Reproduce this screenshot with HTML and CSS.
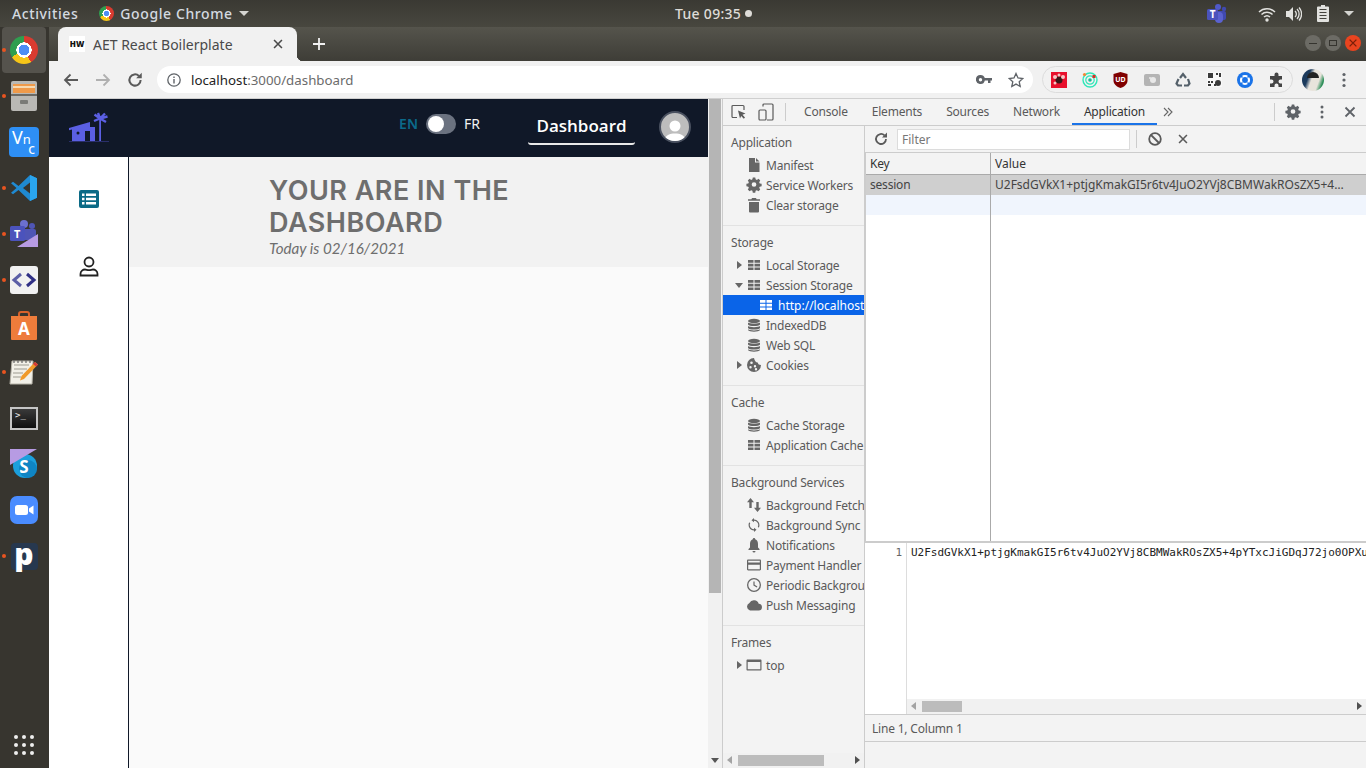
FILE: index.html
```html
<!DOCTYPE html>
<html lang="en">
<head>
  <meta charset="UTF-8">
  <title>AET React Boilerplate</title>
  <link rel="stylesheet" href="styles.css">
</head>
<body>
  <svg class="sprite" xmlns="http://www.w3.org/2000/svg">
    <symbol id="i-table" viewBox="0 0 16 16"><path d="M2 3h5.500v2.700H2zM8.500 3H14v2.700H8.500zM2 6.700h5.500v2.700H2zM8.500 6.700H14v2.700H8.500zM2 10.400h5.500v2.700H2zM8.500 10.400H14v2.700H8.500z"/></symbol>
    <symbol id="i-db" viewBox="0 0 16 16"><ellipse cx="8" cy="4" rx="6" ry="2.200"/><path d="M2 5.600c1 1.500 11 1.500 12 0v2c-1 2-11 2-12 0zM2 9c1 1.500 11 1.500 12 0v2c-1 2-11 2-12 0zM2 12.300c1 1.500 11 1.500 12 0v.7c-1 2.300-11 2.300-12 0z"/></symbol>
    <symbol id="i-file" viewBox="0 0 16 16"><path d="M3 1h6v4.500h4.500V15H3zM10 1l3.500 3.500H10z"/></symbol>
    <symbol id="i-gear" viewBox="0 0 16 16"><path fill-rule="evenodd" d="M6.700 1h2.600l.4 2 1.300.6 1.800-1.100 1.800 1.800-1.100 1.800.6 1.300 2 .4v2.600l-2 .4-.6 1.300 1.100 1.800-1.800 1.800-1.800-1.100-1.300.6-.4 2H6.700l-.4-2-1.300-.6-1.800 1.100-1.800-1.800 1.100-1.800-.6-1.300-2-.4V7.800l2-.4.6-1.300-1.100-1.800 1.800-1.800L5 3.600l1.300-.6zM8 6a2.500 2.500 0 1 0 0 5 2.500 2.500 0 0 0 0-5z" transform="translate(.5 -.5) scale(.94)"/></symbol>
    <symbol id="i-trash" viewBox="0 0 16 16"><path d="M6 1h4l.6 1.200H14v1.600H2V2.200h3.400zM3 5h10v9.500a1 1 0 0 1-1 1H4a1 1 0 0 1-1-1z"/></symbol>
    <symbol id="i-cookie" viewBox="0 0 16 16"><path fill-rule="evenodd" d="M8 1a7 7 0 1 0 7 7c-1.800 0-3-.8-3.300-2.500C9.800 5.500 8.500 3.500 8 1zM5.500 4.500a1.300 1.300 0 1 1 0 2.600 1.300 1.300 0 0 1 0-2.600zM4.500 9a1.200 1.200 0 1 1 0 2.400 1.200 1.200 0 0 1 0-2.400zM9 8a1.200 1.200 0 1 1 0 2.400A1.200 1.200 0 0 1 9 8zm1 3a1.200 1.200 0 1 1 0 2.400 1.200 1.200 0 0 1 0-2.400z"/></symbol>
    <symbol id="i-updown" viewBox="0 0 16 16"><path d="M4.500 1L8 5.200H5.700V11H3.300V5.200H1zM11.500 15L8 10.800h2.300V5h2.400v5.800H15z"/></symbol>
    <symbol id="i-sync" viewBox="0 0 16 16"><path d="M8 2v1.800a4.200 4.200 0 0 1 3.800 6l1 1A5.700 5.700 0 0 0 8 2.500V1L5.500 3.200 8 5.300zM8 14v-1.800a4.200 4.200 0 0 1-3.800-6l-1-1A5.700 5.700 0 0 0 8 13.500V15l2.500-2.200L8 10.700z"/></symbol>
    <symbol id="i-bell" viewBox="0 0 16 16"><path d="M8 1a1.200 1.200 0 0 1 1.200 1.300C11.200 3 12 4.800 12 7v3.500l1.500 1.500v1h-11v-1L4 10.500V7c0-2.200.8-4 2.800-4.700A1.200 1.200 0 0 1 8 1zM6.500 14h3a1.500 1.500 0 0 1-3 0z"/></symbol>
    <symbol id="i-card" viewBox="0 0 16 16"><path fill-rule="evenodd" d="M2.200 2.500h11.600c.7 0 1.200.5 1.200 1.200v8.600c0 .7-.5 1.200-1.200 1.200H2.200c-.7 0-1.200-.5-1.200-1.200V3.700c0-.7.500-1.200 1.200-1.200zm0 1.300v1.700h11.600V3.800zm0 4v4.400h11.600V7.800z"/></symbol>
    <symbol id="i-clock" viewBox="0 0 16 16"><path fill-rule="evenodd" d="M8 1a7 7 0 1 1 0 14A7 7 0 0 1 8 1zm0 1.300a5.700 5.700 0 1 0 0 11.400A5.700 5.700 0 0 0 8 2.300zM7.400 4.500h1.200v3.300l2.800 1.700-.6 1-3.400-2z"/></symbol>
    <symbol id="i-cloud" viewBox="0 0 16 16"><path d="M12.700 6.700A5 5 0 0 0 3.400 6 4 4 0 0 0 4 13.500h8.400a3.400 3.400 0 0 0 .3-6.800z"/></symbol>
    <symbol id="i-frame" viewBox="0 0 16 16"><path fill-rule="evenodd" d="M1.500 2.500h13c.6 0 1 .4 1 1v9c0 .6-.4 1-1 1h-13c-.6 0-1-.4-1-1v-9c0-.6.4-1 1-1zm.2 2.500v7.300h12.600V5z"/></symbol>
    <symbol id="i-close" viewBox="0 0 16 16"><path d="M3.500 3.500l9 9M12.500 3.500l-9 9" fill="none" stroke="currentColor" stroke-width="1.800"/></symbol>
    <symbol id="i-reload" viewBox="0 0 16 16"><path d="M13 8a5 5 0 1 1-1.500-3.600" fill="none" stroke="currentColor" stroke-width="1.800"/><path d="M14 1.500v5H9z"/></symbol>
  </svg>

  <div class="topbar">
    <span class="topbar-item activities">Activities</span>
    <span class="chrome-logo small"></span>
    <span class="topbar-item">Google Chrome</span>
    <span class="caret"></span>
    <div class="clock">Tue 09:35<span class="clock-dot"></span></div>
    <div class="tray">
      <svg class="tray-teams" width="22" height="22" viewBox="0 0 22 22"><circle cx="12" cy="4" r="3" fill="#5059c9"/><circle cx="18" cy="6" r="2.200" fill="#4049b0"/><rect x="9" y="8" width="11" height="9" rx="2" fill="#4049b0"/><rect x="9" y="9" width="8" height="11" rx="4" fill="#5a62d0"/><rect x="1" y="6" width="11" height="11" rx="1.500" fill="#4b53bc"/><text x="3.800" y="15" class="t-letter">T</text></svg>
      <svg width="18" height="16" viewBox="0 0 18 16"><path d="M1 6a11.500 11.500 0 0 1 16 0M3.500 8.500a8 8 0 0 1 11 0M6 11a4.500 4.500 0 0 1 6 0" fill="none" stroke="#e2e2df" stroke-width="1.500"/><circle cx="9" cy="14" r="1.700" fill="#e2e2df"/></svg>
      <svg class="tray-sound" width="17" height="16" viewBox="0 0 17 16"><path d="M1 5h3l4-4v14l-4-4H1z" fill="#e2e2df"/><path d="M10 5a4 4 0 0 1 0 6M12 3a7 7 0 0 1 0 10M14 1.500a9.500 9.500 0 0 1 0 13" fill="none" stroke="#e2e2df" stroke-width="1.300"/></svg>
      <svg class="tray-battery" width="12" height="17" viewBox="0 0 12 17"><path d="M4 0h4v1.500h3a1 1 0 0 1 1 1V16a1 1 0 0 1-1 1H1a1 1 0 0 1-1-1V2.500a1 1 0 0 1 1-1h3z" fill="#e2e2df"/><path d="M2.500 4.500h7M2.500 7.500h7M2.500 10.500h7M2.500 13.500h7" stroke="#45443e" stroke-width="1.200"/></svg>
      <span class="caret"></span>
    </div>
  </div>

  <div class="desktop">
    <nav class="dock">
      <div class="dock-item active running"><span class="chrome-logo"></span></div>
      <div class="dock-item running">
        <svg width="28" height="32" viewBox="0 0 28 32"><rect x="1" y="1" width="26" height="30" rx="2" fill="#b9b8b4"/><rect x="3" y="4" width="22" height="9" fill="#ef9a4a"/><rect x="3" y="6" width="22" height="2" fill="#f7d9b0"/><rect x="1" y="14" width="26" height="2" fill="#6b6a66"/><rect x="10" y="20" width="8" height="4" rx="1" fill="#7a7a76"/></svg>
      </div>
      <div class="dock-item">
        <div class="vnc-icon"><span>V<i>n</i></span><span class="vnc-c">c</span></div>
      </div>
      <div class="dock-item running">
        <svg width="28" height="28" viewBox="0 0 28 28"><path d="M20 1l7 3.300v19.400L20 27 8.500 16l-5.500 4.300L1 18.800 6.500 14 1 9.200 3 7.700 8.500 12z" fill="#1f8ad2"/><path d="M20 1l7 3.300v19.400L20 27z" fill="#2aa5ee"/><path d="M20 8.500v11L13 14z" fill="#37352f"/></svg>
      </div>
      <div class="dock-item running">
        <svg width="30" height="28" viewBox="0 0 30 28"><circle cx="15" cy="4" r="4" fill="#6b70cf"/><circle cx="23" cy="6" r="3" fill="#4f55b5"/><rect x="13" y="9" width="14" height="11" rx="2" fill="#4f55b5"/><rect x="1" y="6" width="15" height="15" rx="1.500" fill="#4b53bc"/><text x="5" y="18" class="t-letter big">T</text><path d="M29 14v13H8z" fill="#b79be3"/></svg>
      </div>
      <div class="dock-item running">
        <svg width="28" height="28" viewBox="0 0 28 28"><rect width="28" height="28" rx="3" fill="#f1f1f1"/><path d="M11 8l-7 6 7 6" fill="none" stroke="#5b5ea6" stroke-width="3"/><path d="M17 8l7 6-7 6" fill="none" stroke="#2f2f85" stroke-width="3"/></svg>
      </div>
      <div class="dock-item">
        <svg width="28" height="30" viewBox="0 0 28 30"><path d="M9 5V3a2 2 0 0 1 2-2h6a2 2 0 0 1 2 2v2" fill="none" stroke="#d8622b" stroke-width="2"/><path d="M1 5h26v23a1 1 0 0 1-1 1H2a1 1 0 0 1-1-1z" fill="#ee7c3b"/><text x="14" y="24" class="store-a">A</text></svg>
      </div>
      <div class="dock-item running">
        <svg width="30" height="28" viewBox="0 0 30 28"><path d="M3 3h21l-1 23H1z" fill="#f2f0e8" stroke="#b6b3a8"/><path d="M5 7h15M5 11h13M4 15h10M4 19h8" stroke="#9c9a90"/><path d="M5 2v3M9 2v3M13 2v3M17 2v3M21 2v3" stroke="#666" stroke-width="1.200"/><path d="M26 4l3 2.500L15 21l-4 1.500L12.500 18z" fill="#f09a2a"/><path d="M26 4l3 2.500-2 2-3-2.500z" fill="#d23b3b"/></svg>
      </div>
      <div class="dock-item">
        <div class="term-icon">&gt;_</div>
      </div>
      <div class="dock-item">
        <svg width="30" height="30" viewBox="0 0 30 30"><circle cx="16" cy="17" r="12" fill="#1b9fdc"/><circle cx="19" cy="20" r="9" fill="#0f85c4"/><path d="M1 0h27L1 16z" fill="#b79be3"/><text x="15" y="24" class="skype-s">S</text></svg>
      </div>
      <div class="dock-item">
        <svg width="28" height="28" viewBox="0 0 28 28"><rect width="28" height="28" rx="7" fill="#4a8cff"/><rect x="5" y="9" width="13" height="10" rx="2.500" fill="#fff"/><path d="M19 12.500l4.500-3v9l-4.500-3z" fill="#fff"/></svg>
      </div>
      <div class="dock-item running">
        <div class="p-icon">p</div>
      </div>
      <div class="app-grid">
        <i></i><i></i><i></i><i></i><i></i><i></i><i></i><i></i><i></i>
      </div>
    </nav>

    <div class="window">
      <div class="tabstrip">
        <div class="tab">
          <span class="favicon">HW</span>
          <span class="tab-title">AET React Boilerplate</span>
          <svg class="tab-close" width="14" height="14"><use href="#i-close"/></svg>
        </div>
        <svg class="new-tab" width="14" height="14" viewBox="0 0 14 14"><path d="M7 1v12M1 7h12" stroke="#f1f1f1" stroke-width="1.800"/></svg>
        <div class="win-controls">
          <span class="win-btn"><i class="win-min"></i></span>
          <span class="win-btn"><i class="win-max"></i></span>
          <span class="win-btn win-close"><svg width="12" height="12"><use href="#i-close"/></svg></span>
        </div>
      </div>

      <div class="toolbar">
        <svg class="nav-btn" width="32" height="16" viewBox="0 0 32 16"><path d="M23 8H10M15.500 2.500L10 8l5.500 5.500" fill="none" stroke="#5a5a5a" stroke-width="1.800"/></svg>
        <svg class="nav-btn" width="32" height="16" viewBox="0 0 32 16"><path d="M9 8h13M16.500 2.500L22 8l-5.500 5.500" fill="none" stroke="#b0b0b0" stroke-width="1.800"/></svg>
        <svg class="nav-btn reload-btn" width="18" height="18"><use href="#i-reload"/></svg>
        <div class="omnibox">
          <svg class="omni-info" width="16" height="16" viewBox="0 0 16 16"><circle cx="8" cy="8" r="6.200" fill="none" stroke="#5f6368" stroke-width="1.300"/><path d="M7.300 7h1.400v4.500H7.300zM7.300 4.500h1.400v1.400H7.300z" fill="#5f6368"/></svg>
          <span class="url"><b>localhost</b>:3000/dashboard</span>
          <svg class="omni-key" width="16" height="10" viewBox="0 0 16 10"><path fill-rule="evenodd" d="M4.500 0a4.500 4.500 0 0 1 4.300 3H16v2.500h-1.500V8h-2.500V5.500H8.800A4.500 4.500 0 1 1 4.500 0zm0 3a1.700 1.700 0 1 0 0 3.400 1.700 1.700 0 0 0 0-3.400z" fill="#5f6368"/></svg>
          <svg class="omni-star" width="16" height="16" viewBox="0 0 16 16"><path d="M8 1.500l2 4.500 4.800.5-3.600 3.200 1 4.800L8 12.100l-4.200 2.400 1-4.800L1.200 6.500 6 6z" fill="none" stroke="#5f6368" stroke-width="1.300"/></svg>
        </div>
        <div class="extensions">
          <span class="ext"><svg width="16" height="16" viewBox="0 0 16 16"><rect width="16" height="16" fill="#e8112d"/><circle cx="8" cy="8" r="3.500" fill="#3a1a1a"/><circle cx="4" cy="5" r="2" fill="#f7c6c6"/><circle cx="12" cy="5" r="2" fill="#f7c6c6"/><circle cx="4" cy="11" r="1.500" fill="#f7c6c6"/><circle cx="8" cy="3" r="1.500" fill="#f7c6c6"/></svg></span>
          <span class="ext"><svg width="16" height="16" viewBox="0 0 16 16"><circle cx="8" cy="8" r="7" fill="none" stroke="#2ee6b8" stroke-width="1.400"/><circle cx="8" cy="8" r="4.200" fill="none" stroke="#2ee6b8" stroke-width="1.200"/><circle cx="8" cy="8" r="1.800" fill="#1fb896"/><circle cx="2.500" cy="2.500" r="1.600" fill="#f58634"/><rect x="10.500" y="3" width="3" height="3" fill="#d93025"/></svg></span>
          <span class="ext"><svg width="15" height="16" viewBox="0 0 15 16"><path d="M7.500 0l7 2v7c0 3-3.500 6-7 7-3.500-1-7-4-7-7V2z" fill="#800000"/><text x="7.500" y="10" class="ublock">UD</text></svg></span>
          <span class="ext"><svg width="16" height="12" viewBox="0 0 16 12"><rect width="16" height="12" rx="2" fill="#b4b4b4"/><circle cx="9" cy="6" r="3" fill="#e8e8e8"/><circle cx="6" cy="4" r="1" fill="#e8e8e8"/></svg></span>
          <span class="ext"><svg width="16" height="16" viewBox="0 0 16 16"><g fill="none" stroke="#54606a" stroke-width="2.200"><path d="M5 6l3-4 3 4"/><path d="M13 7l1.500 4.500-1.500 2H9"/><path d="M3.500 7L1.500 11.500l1.500 2h4"/></g></svg></span>
          <span class="ext"><svg width="15" height="15" viewBox="0 0 15 15"><rect width="15" height="15" fill="#f8f8f8"/><path d="M1 1h5v5H1zM9 1h2v2H9zM12 1h2v4h-2zM1 9h2v2H1zM4 9h2v2H4zM1 12h3v2H1zM7 12h2v2H7z" fill="#3a3a3a"/><circle cx="11" cy="11" r="3" fill="#3a3a3a"/></svg></span>
          <span class="ext"><svg width="16" height="16" viewBox="0 0 16 16"><circle cx="8" cy="8" r="8" fill="#1a73e8"/><circle cx="8" cy="8" r="4" fill="none" stroke="#fff" stroke-width="2.200"/><path d="M3 3l2.500 2.500M13 3l-2.500 2.500M3 13l2.500-2.500M13 13l-2.500-2.500" stroke="#1a73e8" stroke-width="1.500"/></svg></span>
          <span class="ext"><svg width="15" height="15" viewBox="0 0 15 15"><path d="M5.500 2.500a2 2 0 0 1 4 0V4H13v3.500h-1.500a2 2 0 0 0 0 4H13V15H9.500v-1.500a2 2 0 0 0-4 0V15H1v-3.500h1.500a2 2 0 0 0 0-4H1V4h4.500z" fill="#444"/></svg></span>
        </div>
        <div class="profile-pic"><i></i></div>
        <svg class="toolbar-menu" width="4" height="16" viewBox="0 0 4 16"><circle cx="2" cy="2.500" r="1.600" fill="#5f6368"/><circle cx="2" cy="8" r="1.600" fill="#5f6368"/><circle cx="2" cy="13.500" r="1.600" fill="#5f6368"/></svg>
      </div>

      <div class="content">
        <div class="page">
          <header class="app-header">
            <svg class="app-logo" width="40" height="30" viewBox="0 0 40 30"><path d="M0 16L21 10v5h5v14H3V17.500l-3 .8z" fill="#5b5fe3"/><path d="M30.200 6h1.800v23h-1.800z" fill="#5b5fe3"/><path d="M31 6.500L25.500 2.500M31 6.500L29 1M31 6.500L36 1.500M31 6.500L38.500 4.500M31 6.500L25 9M31 6.500L37 10" fill="none" stroke="#5b5fe3" stroke-width="2.400"/><circle cx="9" cy="21" r="1.500" fill="#101828"/><rect x="16" y="19" width="5" height="10" fill="#101828"/><rect x="0" y="29" width="40" height="1" fill="#2a2f6a"/></svg>
            <div class="lang-switch">
              <span class="lang-en">EN</span>
              <span class="toggle"><i></i></span>
              <span class="lang-fr">FR</span>
            </div>
            <a class="nav-link">Dashboard</a>
            <div class="user-avatar">
              <svg width="24" height="24" viewBox="0 0 24 24"><circle cx="12" cy="9" r="5.500" fill="#fff"/><path d="M1 24c1-6 6-7.500 11-7.500S22 18 23 24z" fill="#fff"/></svg>
            </div>
          </header>
          <div class="page-body">
            <aside class="side-nav">
              <svg class="side-icon" width="20" height="18" viewBox="0 0 20 18"><rect width="20" height="18" rx="2" fill="#0b6a86"/><path d="M3 3.500h2.500V6H3zM7 3.500h10V6H7zM3 7.800h2.500v2.500H3zM7 7.800h10v2.500H7zM3 12h2.500v2.500H3zM7 12h10v2.500H7z" fill="#fff"/></svg>
              <svg class="side-icon" width="20" height="21" viewBox="0 0 20 21"><circle cx="10" cy="6" r="4.500" fill="none" stroke="#222" stroke-width="1.800"/><path d="M1.500 19.500v-1.500c0-3 2.500-4.500 4.500-4.500 1.500 0 2 .6 4 .6s2.500-.6 4-.6c2 0 4.500 1.500 4.500 4.500v1.500z" fill="none" stroke="#222" stroke-width="1.800"/></svg>
            </aside>
            <main class="main">
              <section class="banner">
                <h1>YOUR ARE IN THE DASHBOARD</h1>
                <p>Today is 02/16/2021</p>
              </section>
            </main>
          </div>
        </div>

        <div class="page-scroll">
          <div class="page-thumb"></div>
          <span class="arrow-down"></span>
        </div>

        <div class="devtools">
          <div class="dt-toolbar">
            <svg class="dt-icon first" width="16" height="16" viewBox="0 0 16 16"><path d="M6 13.500H2a1 1 0 0 1-1-1v-10a1 1 0 0 1 1-1h10a1 1 0 0 1 1 1V6" fill="none" stroke="#5a5a5a" stroke-width="1.200"/><path d="M7 6.500l7.500 3-3 1.200 2.500 2.800-1.200 1.200-2.600-2.800L9 14.500z" fill="#5a5a5a"/></svg>
            <svg class="dt-icon" width="16" height="18" viewBox="0 0 16 18"><path d="M5 3.500V2a1 1 0 0 1 1-1h8a1 1 0 0 1 1 1v14a1 1 0 0 1-1 1H9" fill="none" stroke="#5a5a5a" stroke-width="1.200"/><rect x="1" y="7" width="7" height="10" rx="1" fill="none" stroke="#5a5a5a" stroke-width="1.200"/></svg>
            <span class="dt-sep"></span>
            <div class="dt-tabs">
              <span class="dt-tab">Console</span>
              <span class="dt-tab">Elements</span>
              <span class="dt-tab">Sources</span>
              <span class="dt-tab">Network</span>
              <span class="dt-tab selected">Application</span>
            </div>
            <svg class="dt-more" width="10" height="10" viewBox="0 0 10 10"><path d="M1 1l4 4-4 4M5 1l4 4-4 4" fill="none" stroke="#666" stroke-width="1.100"/></svg>
            <span class="dt-sep push"></span>
            <svg class="dt-gear" width="16" height="16"><use href="#i-gear"/></svg>
            <svg class="dt-dots" width="4" height="14" viewBox="0 0 4 14"><circle cx="2" cy="2" r="1.500"/><circle cx="2" cy="7" r="1.500"/><circle cx="2" cy="12" r="1.500"/></svg>
            <svg class="dt-x" width="16" height="16"><use href="#i-close"/></svg>
          </div>

          <div class="dt-panels">
            <div class="dt-sidebar">
              <div class="tree">
                <div class="tree-section">
                  <div class="tree-title">Application</div>
                  <div class="tree-item"><span class="tw"></span><svg class="ti"><use href="#i-file"/></svg>Manifest</div>
                  <div class="tree-item"><span class="tw"></span><svg class="ti"><use href="#i-gear"/></svg>Service Workers</div>
                  <div class="tree-item"><span class="tw"></span><svg class="ti"><use href="#i-trash"/></svg>Clear storage</div>
                </div>
                <div class="tree-section">
                  <div class="tree-title">Storage</div>
                  <div class="tree-item"><span class="tw closed"></span><svg class="ti"><use href="#i-table"/></svg>Local Storage</div>
                  <div class="tree-item"><span class="tw open"></span><svg class="ti"><use href="#i-table"/></svg>Session Storage</div>
                  <div class="tree-item nested selected"><svg class="ti"><use href="#i-table"/></svg>http://localhost</div>
                  <div class="tree-item"><span class="tw"></span><svg class="ti"><use href="#i-db"/></svg>IndexedDB</div>
                  <div class="tree-item"><span class="tw"></span><svg class="ti"><use href="#i-db"/></svg>Web SQL</div>
                  <div class="tree-item"><span class="tw closed"></span><svg class="ti"><use href="#i-cookie"/></svg>Cookies</div>
                </div>
                <div class="tree-section">
                  <div class="tree-title">Cache</div>
                  <div class="tree-item"><span class="tw"></span><svg class="ti"><use href="#i-db"/></svg>Cache Storage</div>
                  <div class="tree-item"><span class="tw"></span><svg class="ti"><use href="#i-table"/></svg>Application Cache</div>
                </div>
                <div class="tree-section">
                  <div class="tree-title">Background Services</div>
                  <div class="tree-item"><span class="tw"></span><svg class="ti"><use href="#i-updown"/></svg>Background Fetch</div>
                  <div class="tree-item"><span class="tw"></span><svg class="ti"><use href="#i-sync"/></svg>Background Sync</div>
                  <div class="tree-item"><span class="tw"></span><svg class="ti"><use href="#i-bell"/></svg>Notifications</div>
                  <div class="tree-item"><span class="tw"></span><svg class="ti"><use href="#i-card"/></svg>Payment Handler</div>
                  <div class="tree-item"><span class="tw"></span><svg class="ti"><use href="#i-clock"/></svg>Periodic Background Sync</div>
                  <div class="tree-item"><span class="tw"></span><svg class="ti"><use href="#i-cloud"/></svg>Push Messaging</div>
                </div>
                <div class="tree-section last">
                  <div class="tree-title">Frames</div>
                  <div class="tree-item"><span class="tw closed"></span><svg class="ti"><use href="#i-frame"/></svg>top</div>
                </div>
              </div>
              <div class="h-scroll">
                <span class="arrow-left"></span>
                <span class="h-thumb side-thumb"></span>
                <span class="arrow-right dark"></span>
              </div>
            </div>

            <div class="dt-main">
              <div class="filter-bar">
                <svg class="filter-reload" width="16" height="16"><use href="#i-reload"/></svg>
                <input class="filter-input" type="text" placeholder="Filter">
                <span class="dt-sep"></span>
                <svg class="filter-clear" width="16" height="16" viewBox="0 0 16 16"><circle cx="8" cy="8" r="5.800" fill="none" stroke="#5a5a5a" stroke-width="1.800"/><path d="M4 4l8 8" stroke="#5a5a5a" stroke-width="1.800"/></svg>
                <svg class="filter-x" width="14" height="14"><use href="#i-close"/></svg>
              </div>
              <div class="kv-table">
                <div class="kv-row kv-head"><div class="kv-key">Key</div><div class="kv-val">Value</div></div>
                <div class="kv-row kv-selected"><div class="kv-key">session</div><div class="kv-val">U2FsdGVkX1+ptjgKmakGI5r6tv4JuO2YVj8CBMWakROsZX5+4…</div></div>
                <div class="kv-row kv-empty"><div class="kv-key"></div><div class="kv-val"></div></div>
                <div class="kv-row kv-fill"><div class="kv-key"></div><div class="kv-val"></div></div>
              </div>
              <div class="preview">
                <div class="gutter">1</div>
                <div class="code-pane">
                  <div class="code-line">U2FsdGVkX1+ptjgKmakGI5r6tv4JuO2YVj8CBMWakROsZX5+4pYTxcJiGDqJ72jo0OPXu</div>
                  <div class="h-scroll">
                    <span class="arrow-left"></span>
                    <span class="h-thumb code-thumb"></span>
                    <span class="arrow-right dark"></span>
                  </div>
                </div>
              </div>
              <div class="status-bar">Line 1, Column 1</div>
              <div class="status-rest"></div>
            </div>
          </div>
        </div>
      </div>
    </div>
  </div>
</body>
</html>
```

FILE: styles.css
```css
* {
  box-sizing: border-box;
}

html,
body {
  margin: 0;
  height: 768px;
  overflow: hidden;
}

body {
  font-family: "Noto Sans", Arial, sans-serif;
  font-size: 12px;
  display: flex;
  flex-direction: column;
  background: #37352f;
}

.sprite {
  position: absolute;
  width: 0;
  height: 0;
}

/* gnome top bar */
.topbar {
  height: 27px;
  flex: none;
  display: flex;
  align-items: center;
  padding-left: 12px;
  color: #dcdcd8;
  background: linear-gradient(#3a3933, #48473f);
  position: relative;
}

.topbar-item {
  font-size: 14px;
  font-weight: 500;
  letter-spacing: 0.6px;
  color: #d4dae0;
}

.activities {
  margin-right: 21px;
}

.chrome-logo {
  display: block;
  width: 28px;
  height: 28px;
  border-radius: 50%;
  background: radial-gradient(circle, #4d8df5 0 26%, #fff 27% 38%, transparent 39%),
    conic-gradient(from 30deg, #d93b30 0 120deg, #f5c518 120deg 210deg, #2f9e4f 210deg 330deg, #d93b30 330deg);
}

.chrome-logo.small {
  width: 15px;
  height: 15px;
  margin-right: 6px;
}

.caret {
  width: 0;
  height: 0;
  margin-left: 6px;
  border-left: 5px solid transparent;
  border-right: 5px solid transparent;
  border-top: 5px solid #d4d4d0;
}

.clock {
  position: absolute;
  left: 675px;
  top: 4px;
  font-size: 14px;
  font-weight: 500;
  letter-spacing: 0.3px;
  color: #dedcd8;
  display: flex;
  align-items: center;
}

.clock-dot {
  width: 7px;
  height: 7px;
  border-radius: 50%;
  margin-left: 4px;
  background: #dedcd8;
}

.tray {
  margin-left: auto;
  display: flex;
  align-items: center;
  gap: 11px;
  padding-right: 12px;
}

.tray .caret {
  margin-left: 4px;
}

.tray-teams {
  margin-right: 19px;
}

.tray-sound {
  margin-left: -2px;
}

.tray-battery {
  margin-left: 4px;
}

.t-letter {
  font-family: "Noto Sans", sans-serif;
  font-size: 10px;
  font-weight: 700;
  fill: #fff;
}

.t-letter.big {
  font-size: 11px;
}

/* launcher */
.desktop {
  flex: 1;
  display: flex;
  min-height: 0;
}

.dock {
  width: 49px;
  flex: none;
  display: flex;
  flex-direction: column;
  background: #37352f;
}

.dock-item {
  height: 46px;
  flex: none;
  display: flex;
  align-items: center;
  justify-content: center;
  position: relative;
  margin: 0 3px 0 2px;
}

.dock-item.active {
  background: #55534d;
  border-radius: 4px;
}

.dock-item.running::before {
  content: "";
  position: absolute;
  left: 0;
  top: 21px;
  width: 4px;
  height: 4px;
  border-radius: 50%;
  background: #e95420;
}

.vnc-icon {
  width: 30px;
  height: 30px;
  border-radius: 4px;
  background: #2e8ff5;
  color: #fff;
  font-size: 18px;
  line-height: 20px;
  padding-left: 3px;
  position: relative;
}

.vnc-icon i {
  font-style: normal;
  font-size: 13px;
}

.vnc-c {
  position: absolute;
  right: 4px;
  bottom: 0;
  font-size: 14px;
  line-height: 16px;
}

.store-a {
  font-family: "Noto Sans", sans-serif;
  font-size: 17px;
  font-weight: 700;
  text-anchor: middle;
  fill: #fff;
}

.term-icon {
  width: 28px;
  height: 23px;
  border: 2px solid #c5c5c5;
  background: linear-gradient(#3a3a3a, #0f0f0f);
  color: #eee;
  font-family: "DejaVu Sans Mono", monospace;
  font-size: 9px;
  line-height: 13px;
  padding-left: 3px;
}

.skype-s {
  font-family: "Noto Sans", sans-serif;
  font-size: 17px;
  font-weight: 700;
  text-anchor: middle;
  fill: #fff;
}

.p-icon {
  width: 27px;
  height: 27px;
  border-radius: 4px;
  background: #27384f;
  color: #fff;
  font-size: 30px;
  font-weight: 900;
  line-height: 21px;
  text-align: center;
}

.app-grid {
  margin: auto 0 13px 14px;
  width: 20px;
  display: grid;
  grid-template-columns: repeat(3, 4px);
  gap: 4px;
}

.app-grid i {
  width: 4px;
  height: 4px;
  border-radius: 50%;
  background: #eee;
}

/* chrome window */
.window {
  flex: 1;
  min-width: 0;
  display: flex;
  flex-direction: column;
}

.tabstrip {
  height: 34px;
  flex: none;
  display: flex;
  align-items: flex-end;
  padding-left: 9px;
  background: linear-gradient(#55544c, #3e3d37);
}

.tab {
  width: 239px;
  height: 34px;
  display: flex;
  align-items: center;
  padding: 0 12px 0 11px;
  background: #f1f1f1;
  border-radius: 8px 8px 0 0;
  color: #4a4a4a;
  position: relative;
}

.tab::after {
  content: "";
  position: absolute;
  right: -6px;
  bottom: 0;
  width: 6px;
  height: 6px;
  background: radial-gradient(circle at 100% 0, transparent 6px, #f1f1f1 6.500px);
}

.favicon {
  width: 16px;
  height: 16px;
  background: #fff;
  color: #111;
  font-size: 8px;
  font-weight: 900;
  line-height: 16px;
  text-align: center;
}

.tab-title {
  font-size: 14px;
  margin-left: 8px;
  flex: 1;
}

.tab-close {
  color: #4a4a4a;
}

.new-tab {
  margin: 0 0 10px 15px;
}

.win-controls {
  margin-left: auto;
  display: flex;
  gap: 4px;
  padding: 0 5px 10px 0;
}

.win-btn {
  width: 16px;
  height: 16px;
  border-radius: 50%;
  background: #6c6b65;
  display: flex;
  align-items: center;
  justify-content: center;
}

.win-min {
  width: 8px;
  height: 1px;
  background: #35342f;
}

.win-max {
  width: 8px;
  height: 6px;
  border: 1px solid #35342f;
}

.win-close {
  background: #e9441f;
  color: #7a1f0a;
}

.toolbar {
  height: 38px;
  flex: none;
  display: flex;
  align-items: center;
  padding-left: 6px;
  background: #f1f1f1;
  border-bottom: 1px solid #cfcfcf;
}

.nav-btn {
  flex: none;
}

.reload-btn {
  margin: 0 7px;
  color: #5a5a5a;
  fill: #5a5a5a;
}

.omnibox {
  width: 876px;
  height: 27px;
  margin-left: 6px;
  padding: 0 9px;
  display: flex;
  align-items: center;
  background: #fff;
  border-radius: 14px;
}

.url {
  font-size: 13.300px;
  color: #6b6b6b;
  margin-left: 9px;
}

.url b {
  font-weight: 400;
  color: #222;
}

.omni-key {
  margin-left: auto;
}

.omni-star {
  margin-left: 16px;
}

.extensions {
  width: 251px;
  height: 27px;
  margin-left: 9px;
  display: flex;
  align-items: center;
  border: 1px solid #dcdcdc;
  border-radius: 14px;
}

.ext {
  width: 31.700px;
  display: flex;
  justify-content: center;
}

.ublock {
  font-family: "Noto Sans", sans-serif;
  font-size: 7px;
  font-weight: 700;
  text-anchor: middle;
  fill: #fff;
}

.profile-pic {
  width: 22px;
  height: 22px;
  margin-left: 9px;
  border-radius: 50%;
  background: linear-gradient(110deg, #1b3a5c 0 30%, #e8e4dc 45% 70%, #2f8f5a 85%);
  overflow: hidden;
}

.profile-pic i {
  display: block;
  width: 12px;
  height: 6px;
  margin: 3px 0 0 5px;
  background: #222;
  border-radius: 6px 6px 0 0;
}

.toolbar-menu {
  margin-left: 18px;
}

.content {
  flex: 1;
  min-height: 0;
  display: flex;
}

/* app under test */
.page {
  width: 659px;
  flex: none;
  display: flex;
  flex-direction: column;
  background: #fff;
}

.app-header {
  height: 58px;
  flex: none;
  display: flex;
  align-items: center;
  padding: 0 17px 2px 20px;
  background: #101828;
}

.app-logo {
  flex: none;
}

.lang-switch {
  margin-left: auto;
  display: flex;
  align-items: center;
  gap: 8px;
  font-size: 14px;
  margin-bottom: 7px;
}

.lang-en {
  color: #0b6a8a;
  font-weight: 600;
}

.lang-fr {
  color: #f3f3f3;
}

.toggle {
  width: 30px;
  height: 20px;
  padding: 2px;
  border-radius: 10px;
  background: #6b7280;
}

.toggle i {
  display: block;
  width: 16px;
  height: 16px;
  border-radius: 50%;
  background: #fff;
}

.nav-link {
  width: 107px;
  height: 34px;
  margin: 2px 0 0 48px;
  border-bottom: 2px solid #e8e8e8;
  border-radius: 0 0 3px 3px;
  color: #fff;
  font-family: "Open Sans", sans-serif;
  font-size: 17px;
  font-weight: 600;
  line-height: 30px;
  text-align: center;
}

.user-avatar {
  width: 32px;
  height: 32px;
  margin-left: 24px;
  border: 2px solid #4a5160;
  border-radius: 50%;
  background: #bdbdbd;
  overflow: hidden;
  display: flex;
  align-items: flex-end;
  justify-content: center;
}

.page-body {
  flex: 1;
  min-height: 0;
  display: flex;
}

.side-nav {
  width: 80px;
  flex: none;
  display: flex;
  flex-direction: column;
  align-items: center;
  gap: 48px;
  padding-top: 33px;
  border-right: 1px solid #101828;
}

.main {
  flex: 1;
  background: #fafafa;
}

.banner {
  height: 110px;
  padding: 18px 170px 0 140px;
  background: #f2f2f2;
}

.banner h1 {
  margin: 0;
  font-family: Inter, sans-serif;
  font-size: 27px;
  font-weight: 600;
  letter-spacing: 0.5px;
  line-height: 32px;
  color: #6e6e6e;
}

.banner p {
  margin: 0;
  font-family: Lato, sans-serif;
  font-size: 15.200px;
  font-style: italic;
  line-height: 19px;
  color: #6e6e6e;
}

.page-scroll {
  width: 14px;
  flex: none;
  background: #f1f1f1;
  position: relative;
  padding: 0 1px;
}

.page-thumb {
  height: 494px;
  background: #b5b5b5;
}

.arrow-down {
  position: absolute;
  left: 3px;
  bottom: 5px;
  border-left: 4px solid transparent;
  border-right: 4px solid transparent;
  border-top: 5px solid #555;
}

/* devtools */
.devtools {
  flex: 1;
  min-width: 0;
  display: flex;
  flex-direction: column;
  border-left: 1px solid #ccc;
  color: #5a5a5a;
  background: #f3f3f3;
  letter-spacing: -0.2px;
}

.dt-toolbar {
  height: 27px;
  flex: none;
  display: flex;
  align-items: center;
  border-bottom: 1px solid #ccc;
}

.dt-icon.first {
  margin-left: 8px;
}

.dt-icon {
  margin-right: 11px;
}

.dt-sep {
  width: 1px;
  height: 18px;
  flex: none;
  background: #ccc;
}

.dt-tabs {
  display: flex;
  height: 26px;
  margin-left: 6px;
}

.dt-tab {
  padding: 0 12px;
  line-height: 26px;
  color: #5a5a5a;
}

.dt-tab.selected {
  color: #333;
  border-bottom: 2px solid #1a73e8;
}

.dt-more {
  margin-left: 6px;
}

.dt-sep.push {
  margin-left: auto;
}

.dt-gear {
  margin-left: 10px;
  fill: #5f6368;
}

.dt-dots {
  margin-left: 19px;
  fill: #5f6368;
}

.dt-x {
  margin: 0 8px 0 18px;
  color: #5f6368;
}

.dt-panels {
  flex: 1;
  min-height: 0;
  display: flex;
}

.dt-sidebar {
  width: 142px;
  flex: none;
  display: flex;
  flex-direction: column;
  border-right: 1px solid #ccc;
}

.tree {
  flex: 1;
  min-height: 0;
  overflow: hidden;
}

.tree-section {
  padding-bottom: 10px;
  border-bottom: 1px solid #e2e2e2;
}

.tree-section.last {
  border-bottom: 0;
}

.tree-title {
  height: 29px;
  padding: 8px 0 0 8px;
  line-height: 17px;
}

.tree-item {
  height: 20px;
  display: flex;
  align-items: center;
  padding-left: 12px;
  white-space: nowrap;
  overflow: hidden;
}

.tree-item.nested {
  padding-left: 34px;
}

.tree-item.selected {
  background: #0a64e8;
  color: #fff;
  letter-spacing: 0;
}

.tw {
  width: 10px;
  height: 10px;
  flex: none;
  position: relative;
}

.tw.closed::before,
.tw.open::before {
  content: "";
  position: absolute;
  left: 2px;
  top: 1px;
}

.tw.closed::before {
  border-top: 4px solid transparent;
  border-bottom: 4px solid transparent;
  border-left: 5px solid #666;
}

.tw.open::before {
  top: 3px;
  left: 0;
  border-left: 4px solid transparent;
  border-right: 4px solid transparent;
  border-top: 5px solid #666;
}

.ti {
  width: 16px;
  height: 16px;
  flex: none;
  margin: 0 4px 0 1px;
  fill: #666;
  color: #666;
}

.selected .ti {
  fill: #fff;
}

.h-scroll {
  height: 15px;
  flex: none;
  display: flex;
  align-items: center;
  position: relative;
  background: #f1f1f1;
}

.arrow-left,
.arrow-right {
  position: absolute;
  top: 3px;
  border-top: 4px solid transparent;
  border-bottom: 4px solid transparent;
}

.arrow-left {
  left: 4px;
  border-right: 5px solid #a3a3a3;
}

.arrow-right {
  right: 4px;
  border-left: 5px solid #a3a3a3;
}

.arrow-right.dark {
  border-left-color: #505050;
}

.h-thumb {
  height: 11px;
  background: #bcbcbc;
}

.side-thumb {
  width: 86px;
  margin-left: 15px;
}

.code-thumb {
  width: 40px;
  margin-left: 15px;
}

.dt-main {
  flex: 1;
  min-width: 0;
  display: flex;
  flex-direction: column;
  background: #fff;
}

.filter-bar {
  height: 27px;
  flex: none;
  display: flex;
  align-items: center;
  padding-left: 8px;
  background: #f3f3f3;
  border-bottom: 1px solid #ccc;
}

.filter-reload {
  fill: #5a5a5a;
  color: #5a5a5a;
}

.filter-input {
  width: 233px;
  height: 21px;
  margin: 0 6px 0 8px;
  padding: 0 4px;
  border: 1px solid #dcdcdc;
  outline: 0;
  font-family: inherit;
  font-size: 12px;
  background: #fff;
}

.filter-input::placeholder {
  color: #777;
}

.filter-clear {
  margin-left: 10px;
}

.filter-x {
  margin-left: 13px;
  color: #5a5a5a;
}

.kv-table {
  height: 388px;
  flex: none;
  display: flex;
  flex-direction: column;
  border-left: 1px solid #ccc;
}

.kv-row {
  height: 20px;
  flex: none;
  display: flex;
  line-height: 20px;
}

.kv-key {
  width: 125px;
  flex: none;
  padding-left: 4px;
  border-right: 1px solid #aaa;
}

.kv-val {
  flex: 1;
  min-width: 0;
  padding-left: 4px;
  letter-spacing: 0;
  white-space: nowrap;
  overflow: hidden;
}

.kv-head {
  height: 22px;
  line-height: 21px;
  color: #333;
  background: #f3f3f3;
  border-bottom: 1px solid #aaa;
}

.kv-selected {
  background: #cfcfcf;
  color: #444;
}

.kv-empty {
  background: #f0f5fd;
}

.kv-fill {
  flex: 1;
}

.preview {
  flex: 1;
  min-height: 0;
  display: flex;
  border-top: 2px solid #ccc;
}

.gutter {
  width: 42px;
  flex: none;
  padding: 2px 4px 0 0;
  text-align: right;
  font-family: "DejaVu Sans Mono", monospace;
  font-size: 11px;
  letter-spacing: 0;
  line-height: 15px;
  color: #666;
  border-right: 1px solid #ddd;
}

.code-pane {
  flex: 1;
  min-width: 0;
  display: flex;
  flex-direction: column;
  justify-content: space-between;
}

.code-line {
  padding: 2px 0 0 4px;
  font-family: "DejaVu Sans Mono", monospace;
  font-size: 11px;
  letter-spacing: 0;
  line-height: 15px;
  color: #222;
  white-space: nowrap;
  overflow: hidden;
}

.status-bar {
  height: 28px;
  flex: none;
  padding-left: 7px;
  line-height: 27px;
  background: #f3f3f3;
  border-top: 1px solid #ccc;
  border-bottom: 1px solid #ccc;
}

.status-rest {
  height: 26px;
  flex: none;
  background: #f3f3f3;
}
```
